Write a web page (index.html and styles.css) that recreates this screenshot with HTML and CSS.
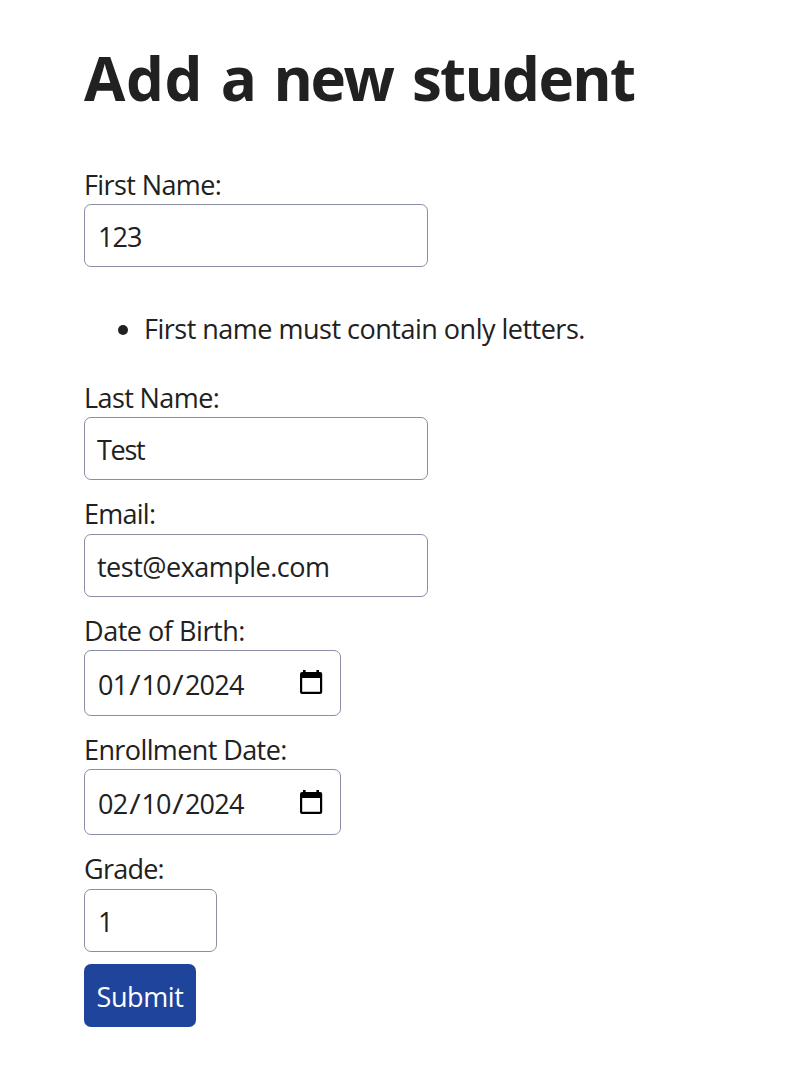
FILE: index.html
```html
<!DOCTYPE html>
<html lang="en">
<head>
<meta charset="utf-8">
<title>Add a new student</title>
<link rel="stylesheet" href="styles.css">
</head>
<body>
<main class="page">
  <h1 class="title"><span class="w-add">Add</span> <span class="w-a">a</span> <span class="w-new">new</span> <span class="w-student">student</span></h1>
  <form class="form">
    <div class="field first"><label>First Name:</label><div class="input number">123</div></div>
    <ul class="errors"><li>First name must contain only letters.</li></ul>
    <div class="field last"><label>Last Name:</label><div class="input">Test</div></div>
    <div class="field email"><label>Email:</label><div class="input address">test@example.com</div></div>
    <div class="field birth"><label>Date of Birth:</label><div class="input number date"><span>01<span class="slash">/</span>10<span class="slash">/</span>2024</span><svg class="cal" viewBox="0 0 24 26"><path fill="#000" fill-rule="evenodd" d="M4 1h2.600v2h10.800V1H20v2h1.200a2 2 0 0 1 2 2v18a2 2 0 0 1-2 2H3a2 2 0 0 1-2-2V5a2 2 0 0 1 2-2h1zM3.200 9v13.800h17.800V9z"/></svg></div></div>
    <div class="field enroll"><label>Enrollment Date:</label><div class="input number date"><span>02<span class="slash">/</span>10<span class="slash">/</span>2024</span><svg class="cal" viewBox="0 0 24 26"><path fill="#000" fill-rule="evenodd" d="M4 1h2.600v2h10.800V1H20v2h1.200a2 2 0 0 1 2 2v18a2 2 0 0 1-2 2H3a2 2 0 0 1-2-2V5a2 2 0 0 1 2-2h1zM3.200 9v13.800h17.800V9z"/></svg></div></div>
    <div class="field grade"><label>Grade:</label><div class="input number">1</div></div>
    <button class="submit" type="button">Submit</button>
  </form>
</main>
</body>
</html>
```
FILE: styles.css
```css
* { box-sizing: border-box; }
body { margin: 0; background: #fff; color: #212121; font: 27px/36px "Open Sans", "Noto Sans", sans-serif; letter-spacing: -0.6px; }
.page { padding: 42px 84px 0; }
.title { margin: 0 0 53px; height: 72px; font-size: 60px; line-height: 72px; font-weight: 700; letter-spacing: 0; white-space: nowrap; }
.w-add { letter-spacing: 0.6px; }
.w-a { margin-left: 2px; }
.w-new { letter-spacing: -2.5px; }
.w-a + .w-new { margin-left: 1px; }
.w-student { margin-left: 4px; letter-spacing: -1.7px; }
.form { display: flex; flex-direction: column; align-items: flex-start; }
label { display: block; height: 37px; white-space: nowrap; }
.input { display: flex; align-items: center; width: 344px; height: 63px; padding: 2px 13px 0 12px; border: 1px solid #898ea4; border-radius: 7px; }
.last .input { letter-spacing: -1.3px; }
.number { padding-left: 13px; letter-spacing: -1px; }
.address { letter-spacing: -0.5px; }
.errors { margin: 44px 0 32px; padding: 0 0 0 60px; height: 37px; letter-spacing: -0.5px; white-space: nowrap; }
.last { margin-bottom: 16px; }
.email { margin-bottom: 16px; }
.email label { height: 38px; letter-spacing: -0.75px; }
.birth label { letter-spacing: -0.46px; }
.date { width: 257px; height: 66px; padding-top: 4px; justify-content: space-between; letter-spacing: -0.8px; }
.slash { display: inline-block; margin: 0 2.6px 0 2.5px; transform: scaleX(1.15); }
.cal { width: 24px; height: 26px; margin: -6px 4px 0 0; }
.enroll .cal { margin-top: -4px; }
.birth { margin-bottom: 16px; }
.enroll { margin-bottom: 16px; }
.grade label { height: 38px; letter-spacing: -0.75px; }
.grade .input { width: 133px; }
.submit { margin-top: 12px; width: 112px; height: 63px; padding: 2px 0 0; border: 0; border-radius: 7px; background: #1f449c; color: #fff; font: inherit; letter-spacing: -0.4px; }
```
